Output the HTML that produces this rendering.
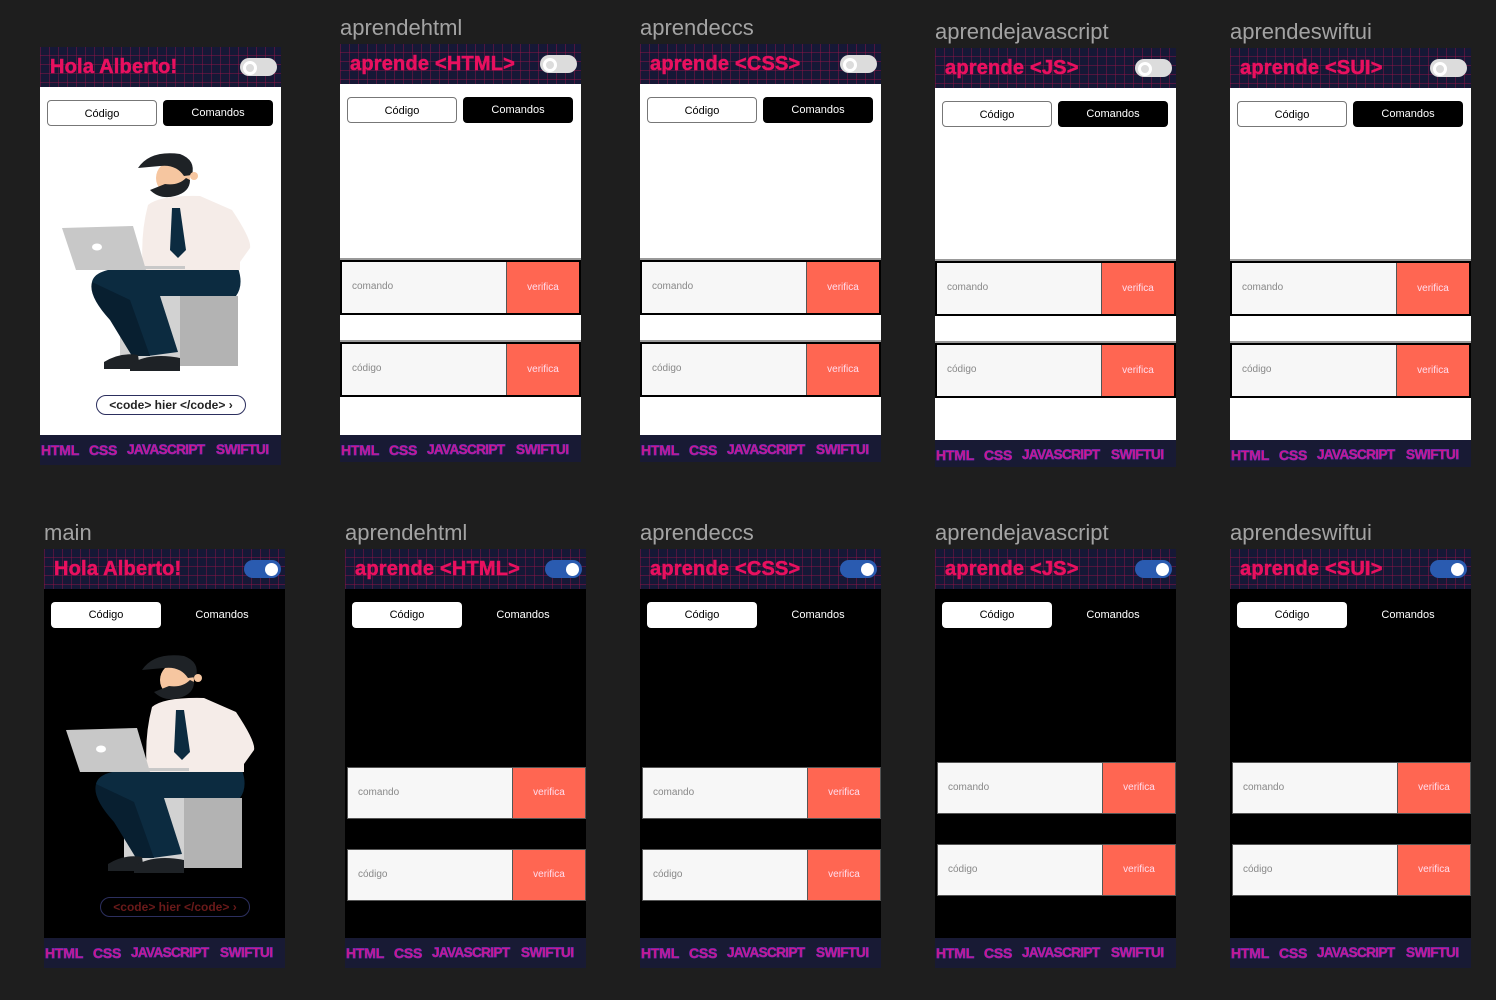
<!DOCTYPE html>
<html><head><meta charset="utf-8"><style>
body{margin:0;width:1496px;height:1000px;background:#1e1e1e;position:relative;overflow:hidden;font-family:"Liberation Sans",sans-serif}
.lb{position:absolute;color:#a3a3a3;font-size:22px;line-height:22px}
.f{position:absolute;width:241px}
.h{position:absolute;left:0;top:0;width:241px;height:40px;background-color:#161836;
background-image:linear-gradient(90deg,rgba(150,20,70,.45) 1px,transparent 1px),linear-gradient(0deg,rgba(150,20,70,.45) 1px,transparent 1px);background-size:9px 9px}
.t{position:absolute;left:10px;top:9px;color:#e8105f;font-weight:900;font-size:20px;letter-spacing:.2px;white-space:nowrap;-webkit-text-stroke:.5px #e8105f}
.tg{position:absolute;right:4px;top:11px;width:37px;height:18px;border-radius:9px;background:#dcdcdc}
.tg:after{content:"";position:absolute;left:3px;top:3px;width:8px;height:8px;border:3px solid #fff;border-radius:50%}
.d .tg{background:#2a5bb0}
.d .tg:after{left:auto;right:3px;border:none;width:13px;height:13px;top:2.5px;background:#fff}
.b{position:absolute;left:0;top:40px;width:241px;background:#fff}
.d .b{background:#000}
.tb{position:absolute;top:53px;width:110px;height:26px;border-radius:4px;font-size:11px;line-height:26px;text-align:center;box-sizing:border-box}
.t1{left:7px;border:1px solid #777;background:#fff;color:#000}
.t2{left:123px;background:#000;color:#fff}
.d .t1{border:none}
.d .t2{background:transparent}
.r{position:absolute;left:0;width:241px;height:55px;box-sizing:border-box;border:2px solid #000;background:#f7f7f7}
.r span{position:absolute;left:10px;top:19px;font-size:10px;color:#888}
.r b{position:absolute;right:0;top:0;bottom:0;width:72px;background:#ff6652;font-weight:normal;font-size:10px;color:#fde;text-align:center;line-height:51px;border-left:1px solid #555}
.d .r{border:1px solid #555;left:2px;width:239px;height:52px}
.d .r b{line-height:50px}
.gap{position:absolute;left:0;width:241px;height:2px;background:#999}
.n{position:absolute;left:0;width:241px;height:28px;background:#181a34}
.n span{position:absolute;top:7px;font-size:14px;font-weight:900;color:#e0127a;-webkit-text-stroke:.7px #7a2bc0;letter-spacing:-.2px}
.n span:nth-child(3){font-size:13.5px;letter-spacing:-.6px}
.n span:nth-child(4){font-size:13.5px;letter-spacing:-.4px}
.pill{position:absolute;left:56px;top:348px;width:148px;height:18px;border:1.5px solid #2c2f5e;border-radius:10px;font-size:12px;font-weight:bold;color:#222;line-height:18px;text-align:center}
.d .pill{color:#6b1a1a;border-color:#2c2f5e}
svg.il{position:absolute;left:0;top:0}
</style></head><body>

<div class="lb" style="left:340px;top:17px">aprendehtml</div>
<div class="lb" style="left:640px;top:17px">aprendeccs</div>
<div class="lb" style="left:935px;top:21px">aprendejavascript</div>
<div class="lb" style="left:1230px;top:21px">aprendeswiftui</div>
<div class="lb" style="left:44px;top:522px">main</div>
<div class="lb" style="left:345px;top:522px">aprendehtml</div>
<div class="lb" style="left:640px;top:522px">aprendeccs</div>
<div class="lb" style="left:935px;top:522px">aprendejavascript</div>
<div class="lb" style="left:1230px;top:522px">aprendeswiftui</div>

<!-- TOP 1 -->
<div class="f" style="left:40px;top:47px;height:418px">
<div class="b" style="height:348px"></div>
<div class="h"><span class="t">Hola Alberto!</span><i class="tg"></i></div>
<div class="tb t1">Código</div><div class="tb t2">Comandos</div>
<svg class="il" width="241" height="388" viewBox="40 47 241 388">
<polygon points="120,296 180,296 180,366 120,366" fill="#d2d2d2"/><polygon points="180,296 238,296 238,366 180,366" fill="#b3b3b3"/>
<path d="M92,282 Q95,268 130,268 L238,268 Q244,285 236,296 L160,296 L178,352 L148,356 Z" fill="#0c2b40"/>
<path d="M92,282 Q88,296 110,320 L132,356 L150,356 L130,300 Z" fill="#081f30"/>
<path d="M104,362 Q120,352 138,355 L140,369 L104,369 Z" fill="#1e2226"/><path d="M130,364 Q150,352 180,358 L180,371 L130,371 Z" fill="#1e2226"/>
<path d="M148,205 Q160,195 200,196 L232,210 Q252,240 250,248 L240,262 L240,270 L143,270 Q140,235 148,205 Z" fill="#f5ece8"/>
<polygon points="172,208 180,208 186,250 178,258 170,250" fill="#0c2b40"/>
<polygon points="62,228 133,226 146,270 76,270" fill="#c8c8c8"/><ellipse cx="97" cy="247" rx="5" ry="3.5" fill="#fff"/>
<rect x="130" y="266" width="55" height="3" fill="#c8c8c8"/>
<circle cx="173" cy="178" r="17" fill="#f6c6a0"/>
<path d="M150,190 Q160,200 175,196 Q190,192 190,180 L186,178 Q178,186 165,184 Z" fill="#1e2226"/>
<path d="M138,168 Q150,150 180,154 Q196,160 192,175 L184,176 Q176,164 160,166 Z" fill="#1e2226"/>
<circle cx="194" cy="176" r="4" fill="#f6c6a0"/>
</svg>
<div class="pill">&lt;code&gt; hier &lt;/code&gt; ›</div>
<div class="n" style="top:388px;height:30px"><span style="left:1px">HTML</span><span style="left:49px">CSS</span><span style="left:87px">JAVASCRIPT</span><span style="left:176px">SWIFTUI</span></div>
</div>

<!-- TOP 2..5 -->
<div class="f" style="left:340px;top:44px;height:418px">
<div class="b" style="height:351px"></div>
<div class="h"><span class="t">aprende &lt;HTML&gt;</span><i class="tg"></i></div>
<div class="tb t1">Código</div><div class="tb t2">Comandos</div>
<div class="gap" style="top:214px"></div><div class="r" style="top:216px"><span>comando</span><b>verifica</b></div>
<div class="gap" style="top:296px"></div><div class="r" style="top:298px"><span>código</span><b>verifica</b></div>
<div class="n" style="top:391px;height:27px"><span style="left:1px">HTML</span><span style="left:49px">CSS</span><span style="left:87px">JAVASCRIPT</span><span style="left:176px">SWIFTUI</span></div>
</div>
<div class="f" style="left:640px;top:44px;height:418px">
<div class="b" style="height:351px"></div>
<div class="h"><span class="t">aprende &lt;CSS&gt;</span><i class="tg"></i></div>
<div class="tb t1">Código</div><div class="tb t2">Comandos</div>
<div class="gap" style="top:214px"></div><div class="r" style="top:216px"><span>comando</span><b>verifica</b></div>
<div class="gap" style="top:296px"></div><div class="r" style="top:298px"><span>código</span><b>verifica</b></div>
<div class="n" style="top:391px;height:27px"><span style="left:1px">HTML</span><span style="left:49px">CSS</span><span style="left:87px">JAVASCRIPT</span><span style="left:176px">SWIFTUI</span></div>
</div>
<div class="f" style="left:935px;top:48px;height:419px">
<div class="b" style="height:352px"></div>
<div class="h"><span class="t">aprende &lt;JS&gt;</span><i class="tg"></i></div>
<div class="tb t1">Código</div><div class="tb t2">Comandos</div>
<div class="gap" style="top:211px"></div><div class="r" style="top:213px"><span>comando</span><b>verifica</b></div>
<div class="gap" style="top:293px"></div><div class="r" style="top:295px"><span>código</span><b>verifica</b></div>
<div class="n" style="top:392px;height:27px"><span style="left:1px">HTML</span><span style="left:49px">CSS</span><span style="left:87px">JAVASCRIPT</span><span style="left:176px">SWIFTUI</span></div>
</div>
<div class="f" style="left:1230px;top:48px;height:419px">
<div class="b" style="height:352px"></div>
<div class="h"><span class="t">aprende &lt;SUI&gt;</span><i class="tg"></i></div>
<div class="tb t1">Código</div><div class="tb t2">Comandos</div>
<div class="gap" style="top:211px"></div><div class="r" style="top:213px"><span>comando</span><b>verifica</b></div>
<div class="gap" style="top:293px"></div><div class="r" style="top:295px"><span>código</span><b>verifica</b></div>
<div class="n" style="top:392px;height:27px"><span style="left:1px">HTML</span><span style="left:49px">CSS</span><span style="left:87px">JAVASCRIPT</span><span style="left:176px">SWIFTUI</span></div>
</div>

<!-- BOTTOM 1 -->
<div class="f d" style="left:44px;top:549px;height:419px">
<div class="b" style="height:349px"></div>
<div class="h"><span class="t">Hola Alberto!</span><i class="tg"></i></div>
<div class="tb t1">Código</div><div class="tb t2">Comandos</div>
<svg class="il" width="241" height="388" viewBox="40 47 241 388">
<polygon points="120,296 180,296 180,366 120,366" fill="#d2d2d2"/><polygon points="180,296 238,296 238,366 180,366" fill="#b3b3b3"/>
<path d="M92,282 Q95,268 130,268 L238,268 Q244,285 236,296 L160,296 L178,352 L148,356 Z" fill="#0c2b40"/>
<path d="M92,282 Q88,296 110,320 L132,356 L150,356 L130,300 Z" fill="#081f30"/>
<path d="M104,362 Q120,352 138,355 L140,369 L104,369 Z" fill="#1e2226"/><path d="M130,364 Q150,352 180,358 L180,371 L130,371 Z" fill="#1e2226"/>
<path d="M148,205 Q160,195 200,196 L232,210 Q252,240 250,248 L240,262 L240,270 L143,270 Q140,235 148,205 Z" fill="#f5ece8"/>
<polygon points="172,208 180,208 186,250 178,258 170,250" fill="#0c2b40"/>
<polygon points="62,228 133,226 146,270 76,270" fill="#c8c8c8"/><ellipse cx="97" cy="247" rx="5" ry="3.5" fill="#fff"/>
<rect x="130" y="266" width="55" height="3" fill="#c8c8c8"/>
<circle cx="173" cy="178" r="17" fill="#f6c6a0"/>
<path d="M150,190 Q160,200 175,196 Q190,192 190,180 L186,178 Q178,186 165,184 Z" fill="#1e2226"/>
<path d="M138,168 Q150,150 180,154 Q196,160 192,175 L184,176 Q176,164 160,166 Z" fill="#1e2226"/>
<circle cx="194" cy="176" r="4" fill="#f6c6a0"/>
</svg>
<div class="pill">&lt;code&gt; hier &lt;/code&gt; ›</div>
<div class="n" style="top:389px;height:30px"><span style="left:1px">HTML</span><span style="left:49px">CSS</span><span style="left:87px">JAVASCRIPT</span><span style="left:176px">SWIFTUI</span></div>
</div>

<!-- BOTTOM 2..5 -->
<div class="f d" style="left:345px;top:549px;height:419px">
<div class="b" style="height:349px"></div>
<div class="h"><span class="t">aprende &lt;HTML&gt;</span><i class="tg"></i></div>
<div class="tb t1">Código</div><div class="tb t2">Comandos</div>
<div class="r" style="top:218px"><span>comando</span><b>verifica</b></div>
<div class="r" style="top:300px"><span>código</span><b>verifica</b></div>
<div class="n" style="top:389px;height:30px"><span style="left:1px">HTML</span><span style="left:49px">CSS</span><span style="left:87px">JAVASCRIPT</span><span style="left:176px">SWIFTUI</span></div>
</div>
<div class="f d" style="left:640px;top:549px;height:419px">
<div class="b" style="height:349px"></div>
<div class="h"><span class="t">aprende &lt;CSS&gt;</span><i class="tg"></i></div>
<div class="tb t1">Código</div><div class="tb t2">Comandos</div>
<div class="r" style="top:218px"><span>comando</span><b>verifica</b></div>
<div class="r" style="top:300px"><span>código</span><b>verifica</b></div>
<div class="n" style="top:389px;height:30px"><span style="left:1px">HTML</span><span style="left:49px">CSS</span><span style="left:87px">JAVASCRIPT</span><span style="left:176px">SWIFTUI</span></div>
</div>
<div class="f d" style="left:935px;top:549px;height:419px">
<div class="b" style="height:349px"></div>
<div class="h"><span class="t">aprende &lt;JS&gt;</span><i class="tg"></i></div>
<div class="tb t1">Código</div><div class="tb t2">Comandos</div>
<div class="r" style="top:213px"><span>comando</span><b>verifica</b></div>
<div class="r" style="top:295px"><span>código</span><b>verifica</b></div>
<div class="n" style="top:389px;height:30px"><span style="left:1px">HTML</span><span style="left:49px">CSS</span><span style="left:87px">JAVASCRIPT</span><span style="left:176px">SWIFTUI</span></div>
</div>
<div class="f d" style="left:1230px;top:549px;height:419px">
<div class="b" style="height:349px"></div>
<div class="h"><span class="t">aprende &lt;SUI&gt;</span><i class="tg"></i></div>
<div class="tb t1">Código</div><div class="tb t2">Comandos</div>
<div class="r" style="top:213px"><span>comando</span><b>verifica</b></div>
<div class="r" style="top:295px"><span>código</span><b>verifica</b></div>
<div class="n" style="top:389px;height:30px"><span style="left:1px">HTML</span><span style="left:49px">CSS</span><span style="left:87px">JAVASCRIPT</span><span style="left:176px">SWIFTUI</span></div>
</div>

</body></html>
